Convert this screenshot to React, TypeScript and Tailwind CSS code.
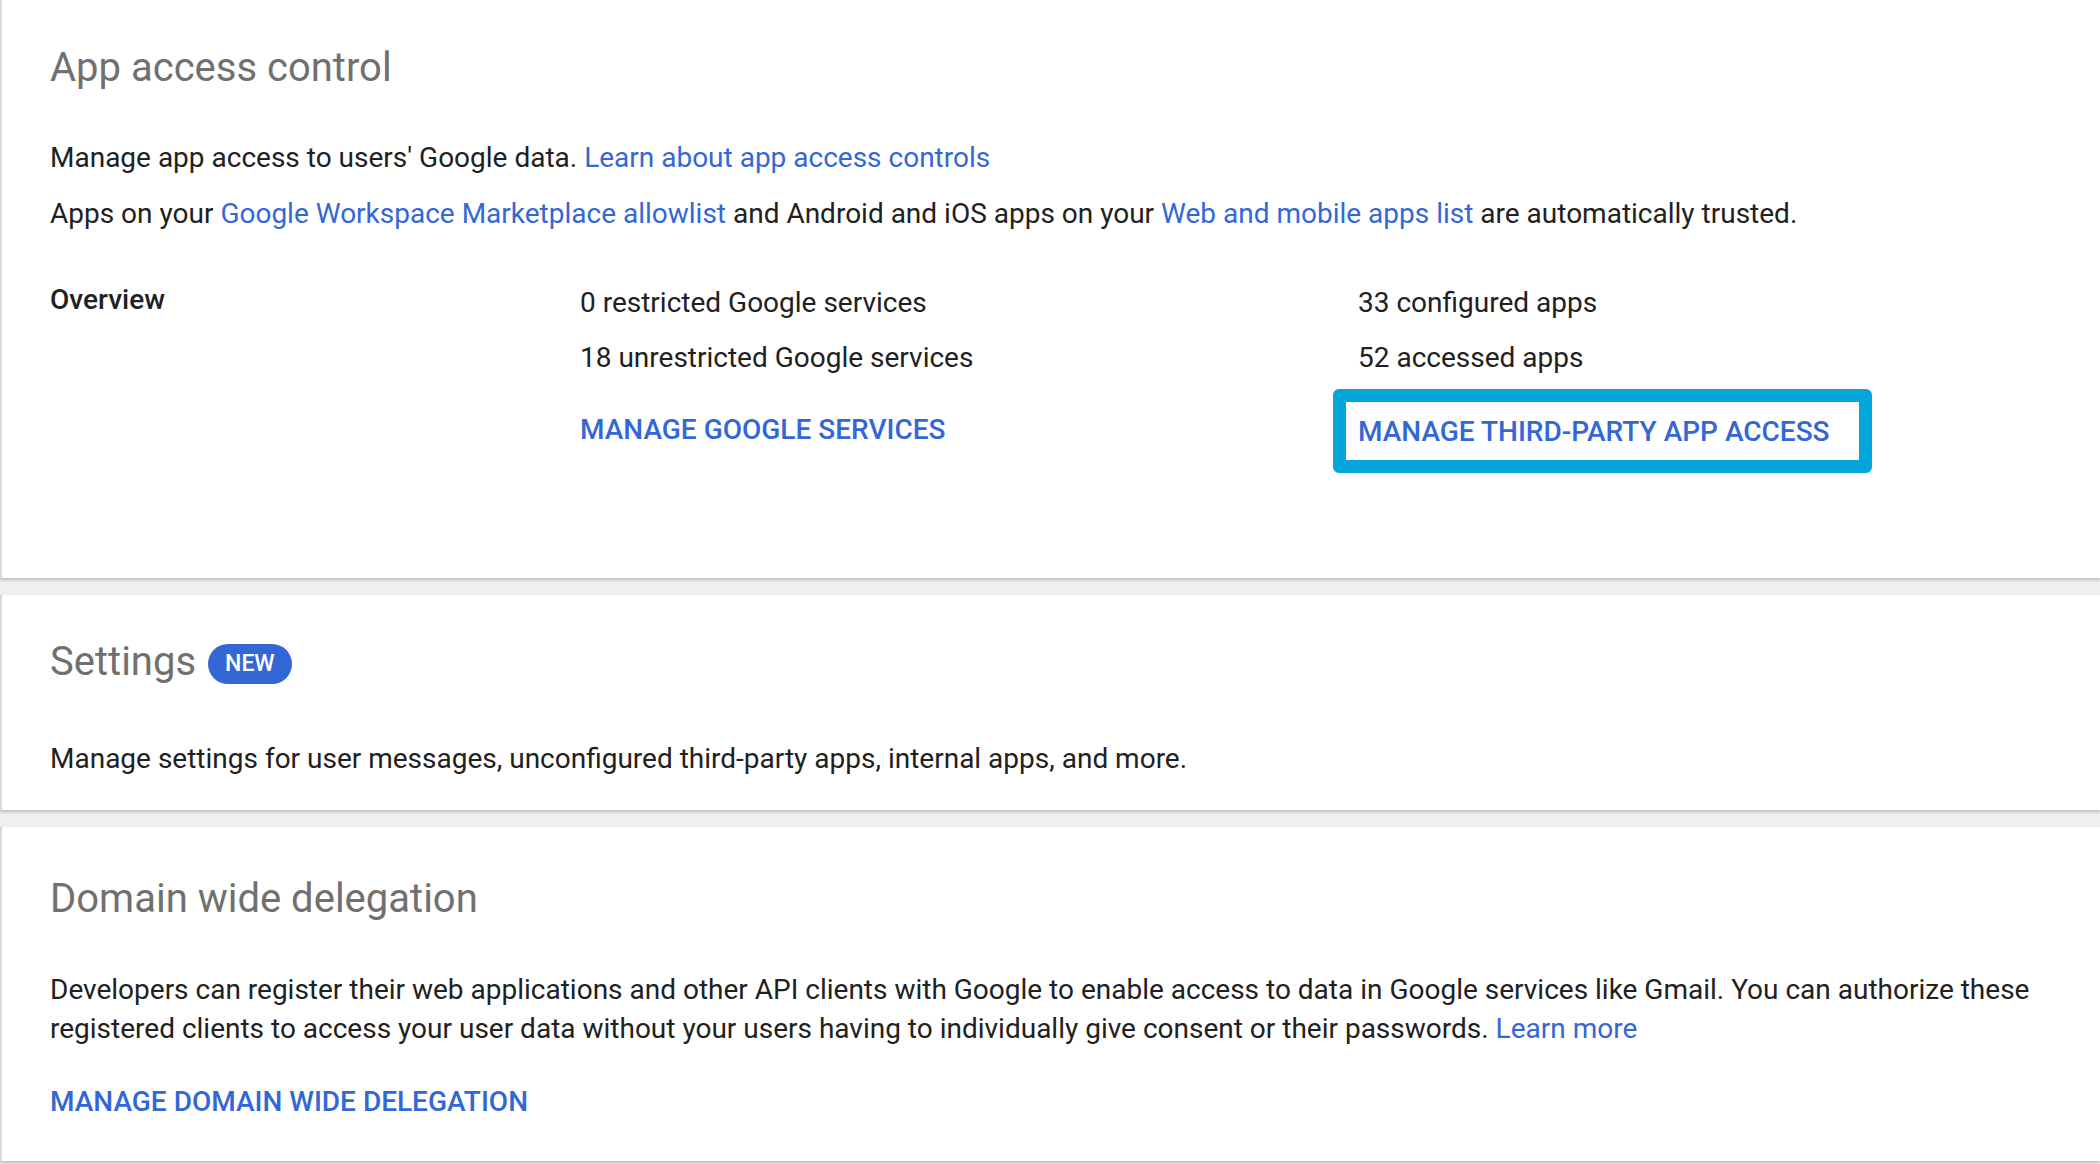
import React from "react";

const font = { fontFamily: "Roboto, 'Noto Sans', Arial, sans-serif" };

function Link({ children }: { children: React.ReactNode }) {
  return <a className="text-[#3367d6] cursor-pointer">{children}</a>;
}

function Card({
  className,
  children,
}: {
  className: string;
  children: React.ReactNode;
}) {
  return (
    <div
      className={`bg-white border-l-[2px] border-[#dadada] pl-[48px] shadow-[0_2px_3px_rgba(0,0,0,0.22)] ${className}`}
    >
      {children}
    </div>
  );
}

export default function App() {
  return (
    <div
      className="min-h-screen bg-[#efefef] text-[#212121] text-[28px] leading-[40px]"
      style={font}
    >
      {/* APP ACCESS CONTROL */}
      <Card className="pt-[44px] pb-[105px]">
        <h2 className="text-[40px] leading-[48px] text-[#707070]">
          App access control
        </h2>
        <p className="mt-[46px]">
          Manage app access to users' Google data.{" "}
          <Link>Learn about app access controls</Link>
        </p>
        <p className="mt-[16px]">
          Apps on your <Link>Google Workspace Marketplace allowlist</Link> and
          Android and iOS apps on your <Link>Web and mobile apps list</Link> are
          automatically trusted.
        </p>

        <div className="grid grid-cols-[530px_778px_1fr] mt-[49px]">
          <div className="font-medium -mt-[3px]">Overview</div>
          <div className="flex flex-col">
            <div>0 restricted Google services</div>
            <div className="mt-[15px]">18 unrestricted Google services</div>
            <div className="mt-[32px] font-medium text-[#3367d6]">
              MANAGE GOOGLE SERVICES
            </div>
          </div>
          <div className="flex flex-col">
            <div>33 configured apps</div>
            <div className="mt-[15px]">52 accessed apps</div>
            <div className="mt-[11px] -ml-[25px] w-[539px] h-[84px] border-[13px] border-[#03a6dc] rounded-[6px] flex items-center pl-[12px] pt-[1px]">
              <span className="font-medium text-[#3367d6]">
                MANAGE THIRD-PARTY APP ACCESS
              </span>
            </div>
          </div>
        </div>
      </Card>

      {/* SETTINGS */}
      <Card className="mt-[17px] pt-[43px] pb-[31px]">
        <div className="flex items-center gap-[12px]">
          <h2 className="text-[40px] leading-[48px] text-[#707070]">
            Settings
          </h2>
          <span className="mt-[4px] h-[40px] px-[17px] rounded-full bg-[#3367d6] text-white text-[23px] font-medium flex items-center">
            NEW
          </span>
        </div>
        <p className="mt-[53px]">
          Manage settings for user messages, unconfigured third-party apps,
          internal apps, and more.
        </p>
      </Card>

      {/* DOMAIN WIDE DELEGATION */}
      <Card className="mt-[17px] pt-[48px] pb-[39px] pr-[30px]">
        <h2 className="text-[40px] leading-[48px] text-[#707070]">
          Domain wide delegation
        </h2>
        <p className="mt-[47px] leading-[39px]">
          Developers can register their web applications and other API clients
          with Google to enable access to data in Google services like Gmail.
          You can authorize these
          <br />
          registered clients to access your user data without your users having
          to individually give consent or their passwords.{" "}
          <Link>Learn more</Link>
        </p>
        <div className="mt-[34px] font-medium text-[#3367d6]">
          MANAGE DOMAIN WIDE DELEGATION
        </div>
      </Card>
    </div>
  );
}
